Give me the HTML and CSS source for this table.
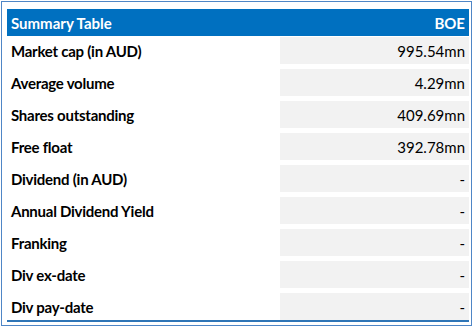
FILE: index.html
```
<!DOCTYPE html>
<html>
<head>
<meta charset="utf-8">
<link rel="stylesheet" href="styles.css">
</head>
<body>
<div class="frame">
  <div class="table">
    <div class="head">
      <span>Summary Table</span>
      <span>BOE</span>
    </div>
    <div class="row"><div class="label">Market cap (in AUD)</div><div class="value">995.54mn</div></div>
    <div class="row"><div class="label">Average volume</div><div class="value">4.29mn</div></div>
    <div class="row"><div class="label">Shares outstanding</div><div class="value">409.69mn</div></div>
    <div class="row"><div class="label">Free float</div><div class="value">392.78mn</div></div>
    <div class="row"><div class="label">Dividend (in AUD)</div><div class="value">-</div></div>
    <div class="row"><div class="label">Annual Dividend Yield</div><div class="value">-</div></div>
    <div class="row"><div class="label">Franking</div><div class="value">-</div></div>
    <div class="row"><div class="label">Div ex-date</div><div class="value">-</div></div>
    <div class="row"><div class="label">Div pay-date</div><div class="value">-</div></div>
  </div>
</div>
</body>
</html>
```
FILE: styles.css
```
html, body {
  margin: 0;
  padding: 0;
  background: #ffffff;
}
body {
  padding: 1px;
  font-family: Lato, "Open Sans", "Liberation Sans", sans-serif;
  color: #000000;
}
.frame {
  width: 471px;
  height: 325px;
  border: 1px solid #4f86c6;
  padding: 7px 3px 0 5px;
  box-sizing: border-box;
}
.table {
  width: 462px;
  display: flex;
  flex-direction: column;
  gap: 5px;
  border-bottom: 2px solid #2e75b6;
}
.head {
  height: 27px;
  background: #0070c0;
  color: #ffffff;
  font-weight: bold;
  font-size: 15px;
  display: flex;
  justify-content: space-between;
  align-items: center;
  padding: 0 4px;
  margin-bottom: -4px;
}
.row {
  display: flex;
  height: 27px;
  font-size: 15px;
}
.label {
  width: 273px;
  font-weight: bold;
  letter-spacing: -0.25px;
  display: flex;
  align-items: center;
  padding-left: 4px;
  box-sizing: border-box;
}
.value {
  flex: 1;
  background: #f2f2f2;
  display: flex;
  align-items: center;
  justify-content: flex-end;
  padding-right: 4px;
}
```
